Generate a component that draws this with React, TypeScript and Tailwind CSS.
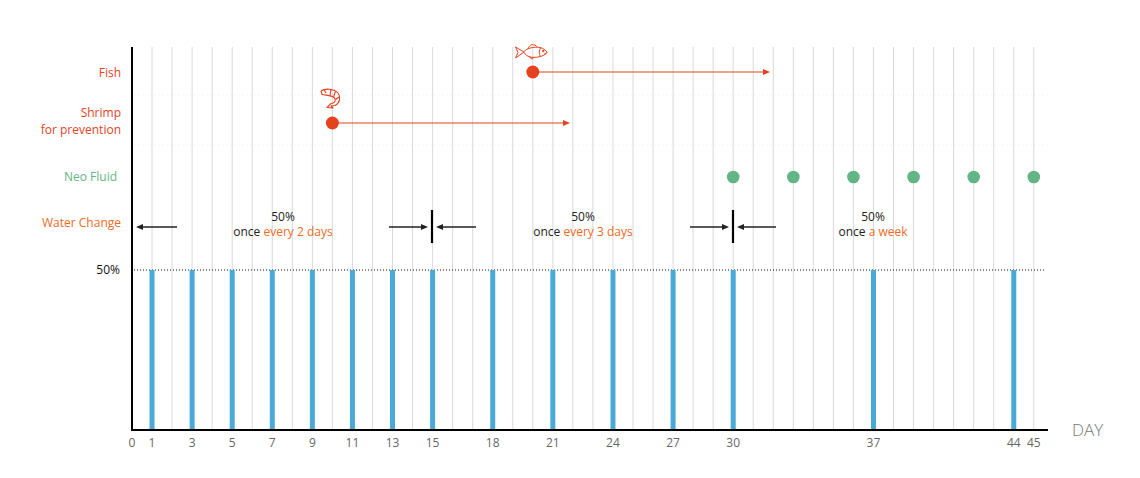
const X0 = 132;
const STEP = 20.04;
const dx = (d: number) => X0 + d * STEP;

const days = Array.from({ length: 45 }, (_, i) => i + 1);
const bars = [1, 3, 5, 7, 9, 11, 13, 15, 18, 21, 24, 27, 30, 37, 44];
const ticks = [0, 1, 3, 5, 7, 9, 11, 13, 15, 18, 21, 24, 27, 30, 37, 44, 45];
const neo = [30, 33, 36, 39, 42, 45];

const RED = '#e5421e';
const ORANGE = '#f06a1f';
const GREEN = '#62b585';
const BLUE = '#4aa9d6';

// arrow: line plus filled head at x2
const Arrow = ({ x1, x2, y, color }: { x1: number; x2: number; y: number; color: string }) => {
  const dir = x2 > x1 ? 1 : -1;
  return (
    <g>
      <line x1={x1} y1={y} x2={x2 - dir * 5} y2={y} stroke={color} strokeWidth={1.3} />
      <path d={`M${x2} ${y} L${x2 - dir * 7} ${y - 3} L${x2 - dir * 7} ${y + 3} Z`} fill={color} />
    </g>
  );
};

const Fish = ({ x, y }: { x: number; y: number }) => (
  <g transform={`translate(${x} ${y})`} fill="none" stroke={RED} strokeWidth={1} strokeLinejoin="round">
    <path d="M0.5 3 L9 8 L0.5 14 L3 8.5 Z" />
    <path d="M8.5 8 C12 4 19 2.5 25 3.5 C28.5 4.2 31 6.5 32 8.5 C30 11.5 24 14 16 13.2 C12.5 12.8 10.3 10.5 8.5 8 Z" />
    <path d="M13 5 C14 2.5 15 1 16.5 0.8 C19 0.6 21 1.2 22 2.8" />
    <path d="M25.5 4 C23.8 6.8 23.8 10.2 25.5 12.6" />
    <path d="M29 10.3 L32 8.5" />
    <path d="M14 11.8 L16.5 15 L19 13.4" />
    <circle cx={28.3} cy={7} r={0.8} fill={RED} />
  </g>
);

const Shrimp = ({ x, y }: { x: number; y: number }) => (
  <g transform={`translate(${x} ${y})`} fill="none" stroke={RED} strokeWidth={1.1} strokeLinejoin="round">
    <path d="M1 3 C5 0 14 0.5 18 5 C21 9 20 15 15 17.5 L11 18" />
    <path d="M2 6.5 C6 7.5 11 7 14 9.5 C16 11.5 15.5 14 13 15 L11 15.5" />
    <path d="M1 3 L2 6.5" />
    <path d="M4 1.5 L6 5" />
    <path d="M11 1.5 L10 7.5" />
    <path d="M15.5 3.5 L13.5 9" />
    <path d="M19 9 L15.5 11.5" />
    <path d="M11 15.5 L7 19.5 L13 20 L11 18" />
  </g>
);

const Note = ({ cx, tail }: { cx: number; tail: string }) => (
  <text x={cx} y={221} fill="#222" textAnchor="middle" fontSize={12}>
    <tspan x={cx}>50%</tspan>
    <tspan x={cx} dy={15}>
      once <tspan fill={ORANGE}>{tail}</tspan>
    </tspan>
  </text>
);

export default function App() {
  return (
    <div className="w-[1140px] h-[478px] bg-white font-['Open_Sans',sans-serif]">
      <svg width={1140} height={478} viewBox="0 0 1140 478">
        {/* faint row separators */}
        <line x1={134} y1={95} x2={1050} y2={95} stroke="#f5f5f5" strokeDasharray="2 2" />
        <line x1={134} y1={145} x2={1050} y2={145} stroke="#f5f5f5" strokeDasharray="2 2" />

        {/* day grid */}
        {days.map((d) => (
          <line key={d} x1={dx(d)} y1={47} x2={dx(d)} y2={430} stroke="#d9d9d9" strokeWidth={1} />
        ))}

        {/* 50% level */}
        <line x1={134} y1={270} x2={1046} y2={270} stroke="#111" strokeWidth={1} strokeDasharray="1 2" />

        {/* water change bars */}
        {bars.map((d) => (
          <rect key={d} x={dx(d) - 2.5} y={270} width={5} height={160} fill={BLUE} />
        ))}

        {/* axes */}
        <line x1={132} y1={47} x2={132} y2={431} stroke="#000" strokeWidth={2} />
        <line x1={131} y1={430} x2={1048} y2={430} stroke="#000" strokeWidth={2} />

        {/* left labels */}
        <g textAnchor="end" fontSize={12}>
          <text x={121} y={77} fill={RED}>Fish</text>
          <text x={121} y={117} fill={RED}>Shrimp</text>
          <text x={121} y={133.5} fill={RED}>for prevention</text>
          <text x={117} y={181} fill={GREEN}>Neo Fluid</text>
          <text x={121} y={227} fill={ORANGE}>Water Change</text>
          <text x={120} y={274} fill="#111">50%</text>
        </g>

        {/* fish */}
        <Fish x={515} y={44} />
        <line x1={dx(20)} y1={72} x2={764} y2={72} stroke={RED} strokeWidth={1.2} />
        <path d="M770 72 L763 69 L763 75 Z" fill={RED} />
        <circle cx={dx(20)} cy={72} r={6.5} fill={RED} />

        {/* shrimp */}
        <Shrimp x={320} y={88} />
        <line x1={dx(10)} y1={123} x2={564} y2={123} stroke={RED} strokeWidth={1.2} />
        <path d="M570 123 L563 120 L563 126 Z" fill={RED} />
        <circle cx={dx(10)} cy={123} r={6.5} fill={RED} />

        {/* neo fluid */}
        {neo.map((d) => (
          <circle key={d} cx={dx(d)} cy={177} r={6.3} fill={GREEN} />
        ))}

        {/* water change schedule */}
        <Arrow x1={177} x2={136} y={227} color="#222" />
        <Arrow x1={389} x2={428} y={227} color="#222" />
        <line x1={432} y1={210} x2={432} y2={243} stroke="#000" strokeWidth={2.2} />
        <Arrow x1={476} x2={436} y={227} color="#222" />
        <Arrow x1={690} x2={729} y={227} color="#222" />
        <line x1={733} y1={210} x2={733} y2={243} stroke="#000" strokeWidth={2.2} />
        <Arrow x1={776} x2={737} y={227} color="#222" />

        <Note cx={283} tail="every 2 days" />
        <Note cx={583} tail="every 3 days" />
        <Note cx={873} tail="a week" />

        {/* x axis */}
        <g textAnchor="middle" fontSize={12} fill="#666">
          {ticks.map((d) => (
            <text key={d} x={dx(d)} y={447}>{d}</text>
          ))}
        </g>
        <text x={1072} y={436} fontSize={17} fill="#777" fontWeight={300}>DAY</text>
      </svg>
    </div>
  );
}
